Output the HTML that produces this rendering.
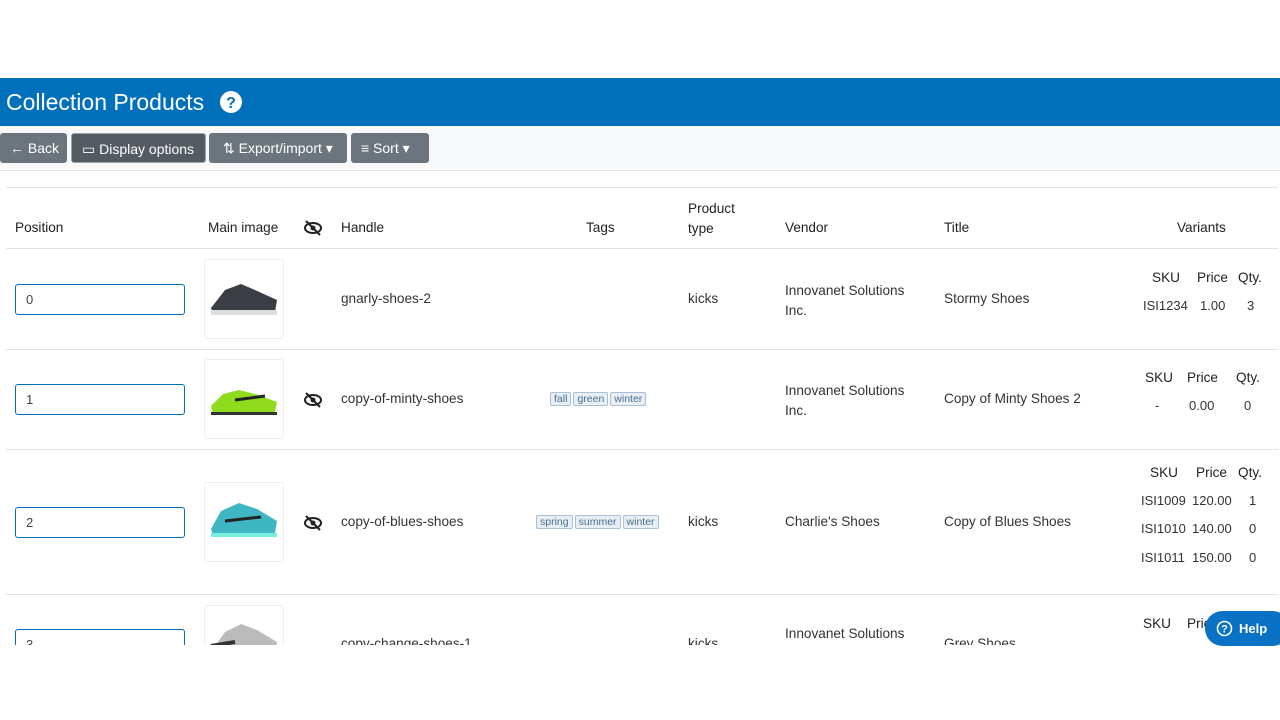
<!DOCTYPE html><html><head><style>
body{margin:0;width:1280px;height:720px;background:#fff;font-family:"Liberation Sans",sans-serif;position:relative;overflow:hidden;color:#333}
.a{position:absolute}
.hdr{left:0;top:78px;width:1280px;height:48px;background:#0070ba}
.hdr span{position:absolute;left:6px;top:11px;font-size:23px;color:#fff}
.tb{left:0;top:126px;width:1280px;height:44px;background:#f8f9fa;border-bottom:1px solid #e3e3e3}
.btn{position:absolute;top:7px;height:30px;background:#6c757d;color:#fff;border-radius:3px;font-size:14px;line-height:30px;box-sizing:border-box;padding-left:10px}
.t{font-size:13.6px;color:#333;position:absolute}
.v{font-size:13px;color:#333;position:absolute}
.th{font-size:13.6px;color:#222;position:absolute}
.line{position:absolute;left:6px;width:1272px;height:1px;background:#dee2e6}
.inp{position:absolute;left:15px;width:170px;height:31px;border:1px solid #0070ba;border-radius:3px;box-sizing:border-box;font-size:13px;padding-left:10px;line-height:29px;color:#444}
.img{position:absolute;left:204px;width:80px;height:80px;border:1px solid #eee;border-radius:3px;box-sizing:border-box;background:#fff}
.tag{display:inline-block;font-size:10.5px;color:#4a6f8f;background:#e8eef4;border:1px solid #aac0d5;border-radius:2px;padding:0 3px;line-height:12px;margin-right:2px}
</style></head><body>
<div class="a hdr"><span>Collection Products</span>
<svg class="a" style="left:219px;top:12px" width="24" height="24"><circle cx="12" cy="12" r="11" fill="#fff"/><text x="12" y="18" font-size="16" font-weight="bold" text-anchor="middle" fill="#0070ba" font-family="Liberation Sans">?</text></svg></div>
<div class="a tb">
<div class="btn" style="left:0;width:67px">← Back</div>
<div class="btn" style="left:71px;width:135px;background:#545b62;border:1px solid #9aa">▭ Display options</div>
<div class="btn" style="left:209px;width:138px;padding-left:14px">⇅ Export/import ▾</div>
<div class="btn" style="left:351px;width:78px">≡ Sort ▾</div>
</div>
<div class="line" style="top:187px"></div>
<div class="th" style="left:15px;top:220px">Position</div>
<div class="th" style="left:208px;top:220px">Main image</div>
<svg class="a" style="left:304px;top:220px" width="18" height="16"><ellipse cx="9" cy="8" rx="8" ry="5" fill="none" stroke="#222" stroke-width="2"/><circle cx="9" cy="8" r="2.5" fill="#222"/><line x1="2" y1="1" x2="16" y2="15" stroke="#222" stroke-width="2"/></svg>
<div class="th" style="left:341px;top:220px">Handle</div>
<div class="th" style="left:586px;top:220px">Tags</div>
<div class="th" style="left:688px;top:199px;line-height:20px">Product<br>type</div>
<div class="th" style="left:785px;top:220px">Vendor</div>
<div class="th" style="left:944px;top:220px">Title</div>
<div class="th" style="left:1177px;top:220px">Variants</div>
<div class="line" style="top:248px"></div>

<div class="inp" style="top:284px">0</div>
<div class="img" style="top:259px"><svg width="78" height="78"><path d="M6 48 L20 30 L36 24 L50 30 L72 40 L70 52 L8 54Z" fill="#3a3d44"/><rect x="6" y="50" width="66" height="5" fill="#ddd"/></svg></div>
<div class="t" style="left:341px;top:291px">gnarly-shoes-2</div>
<div class="t" style="left:688px;top:291px">kicks</div>
<div class="t" style="left:785px;top:281px;line-height:20px">Innovanet Solutions<br>Inc.</div>
<div class="t" style="left:944px;top:291px">Stormy Shoes</div>
<div class="th" style="left:1152px;top:270px">SKU</div><div class="th" style="left:1197px;top:270px">Price</div><div class="th" style="left:1238px;top:270px">Qty.</div>
<div class="v" style="left:1143px;top:298px">ISI1234</div><div class="v" style="left:1200px;top:298px">1.00</div><div class="v" style="left:1247px;top:298px">3</div>
<div class="line" style="top:349px"></div>

<div class="inp" style="top:384px">1</div>
<div class="img" style="top:359px"><svg width="78" height="78"><path d="M6 46 L18 34 L34 30 L50 34 L72 42 L70 52 L8 54Z" fill="#8fdc1e"/><path d="M30 40 L60 36" stroke="#222" stroke-width="3"/><rect x="6" y="52" width="66" height="3" fill="#333"/></svg></div>
<svg class="a" style="left:304px;top:392px" width="18" height="16"><ellipse cx="9" cy="8" rx="8" ry="5" fill="none" stroke="#222" stroke-width="2"/><circle cx="9" cy="8" r="2.5" fill="#222"/><line x1="2" y1="1" x2="16" y2="15" stroke="#222" stroke-width="2"/></svg>
<div class="t" style="left:341px;top:391px">copy-of-minty-shoes</div>
<div class="a" style="left:550px;top:389px"><span class="tag">fall</span><span class="tag">green</span><span class="tag">winter</span></div>
<div class="t" style="left:785px;top:381px;line-height:20px">Innovanet Solutions<br>Inc.</div>
<div class="t" style="left:944px;top:391px">Copy of Minty Shoes 2</div>
<div class="th" style="left:1145px;top:370px">SKU</div><div class="th" style="left:1187px;top:370px">Price</div><div class="th" style="left:1236px;top:370px">Qty.</div>
<div class="v" style="left:1155px;top:398px">-</div><div class="v" style="left:1189px;top:398px">0.00</div><div class="v" style="left:1244px;top:398px">0</div>
<div class="line" style="top:449px"></div>

<div class="inp" style="top:507px">2</div>
<div class="img" style="top:482px"><svg width="78" height="78"><path d="M6 46 L16 28 L34 20 L52 26 L72 38 L70 50 L8 52Z" fill="#3fb6c4"/><path d="M20 38 L56 34" stroke="#222" stroke-width="3"/><rect x="6" y="50" width="66" height="4" fill="#7ed"/></svg></div>
<svg class="a" style="left:304px;top:515px" width="18" height="16"><ellipse cx="9" cy="8" rx="8" ry="5" fill="none" stroke="#222" stroke-width="2"/><circle cx="9" cy="8" r="2.5" fill="#222"/><line x1="2" y1="1" x2="16" y2="15" stroke="#222" stroke-width="2"/></svg>
<div class="t" style="left:341px;top:514px">copy-of-blues-shoes</div>
<div class="a" style="left:536px;top:512px"><span class="tag">spring</span><span class="tag">summer</span><span class="tag">winter</span></div>
<div class="t" style="left:688px;top:514px">kicks</div>
<div class="t" style="left:785px;top:514px">Charlie's Shoes</div>
<div class="t" style="left:944px;top:514px">Copy of Blues Shoes</div>
<div class="th" style="left:1150px;top:465px">SKU</div><div class="th" style="left:1196px;top:465px">Price</div><div class="th" style="left:1238px;top:465px">Qty.</div>
<div class="v" style="left:1141px;top:493px">ISI1009</div><div class="v" style="left:1192px;top:493px">120.00</div><div class="v" style="left:1249px;top:493px">1</div>
<div class="v" style="left:1141px;top:521px">ISI1010</div><div class="v" style="left:1192px;top:521px">140.00</div><div class="v" style="left:1249px;top:521px">0</div>
<div class="v" style="left:1141px;top:550px">ISI1011</div><div class="v" style="left:1192px;top:550px">150.00</div><div class="v" style="left:1249px;top:550px">0</div>
<div class="line" style="top:594px"></div>

<div class="a" style="left:0;top:595px;width:1280px;height:50px;overflow:hidden">
<div class="inp" style="top:34px">3</div>
<div class="img" style="top:10px"><svg width="78" height="78"><path d="M6 46 L20 26 L36 18 L52 24 L72 36 L70 50 L8 52Z" fill="#bbb"/><path d="M6 40 L30 36" stroke="#333" stroke-width="4"/></svg></div>
<div class="t" style="left:341px;top:41px">copy-change-shoes-1</div>
<div class="t" style="left:688px;top:41px">kicks</div>
<div class="t" style="left:785px;top:31px">Innovanet Solutions</div>
<div class="t" style="left:944px;top:41px">Grey Shoes</div>
<div class="th" style="left:1143px;top:21px">SKU</div><div class="th" style="left:1187px;top:21px">Price</div>
</div>
<div class="a" style="left:1205px;top:611px;width:85px;height:35px;background:#0a72c4;border-radius:18px;color:#fff;font-weight:bold;font-size:13px;line-height:35px">
<svg class="a" style="left:11px;top:9px" width="17" height="17"><circle cx="8.5" cy="8.5" r="7" fill="none" stroke="#fff" stroke-width="1.6"/><text x="8.5" y="12.5" font-size="11" font-weight="bold" text-anchor="middle" fill="#fff" font-family="Liberation Sans">?</text></svg>
<span class="a" style="left:34px">Help</span></div>
</body></html>
